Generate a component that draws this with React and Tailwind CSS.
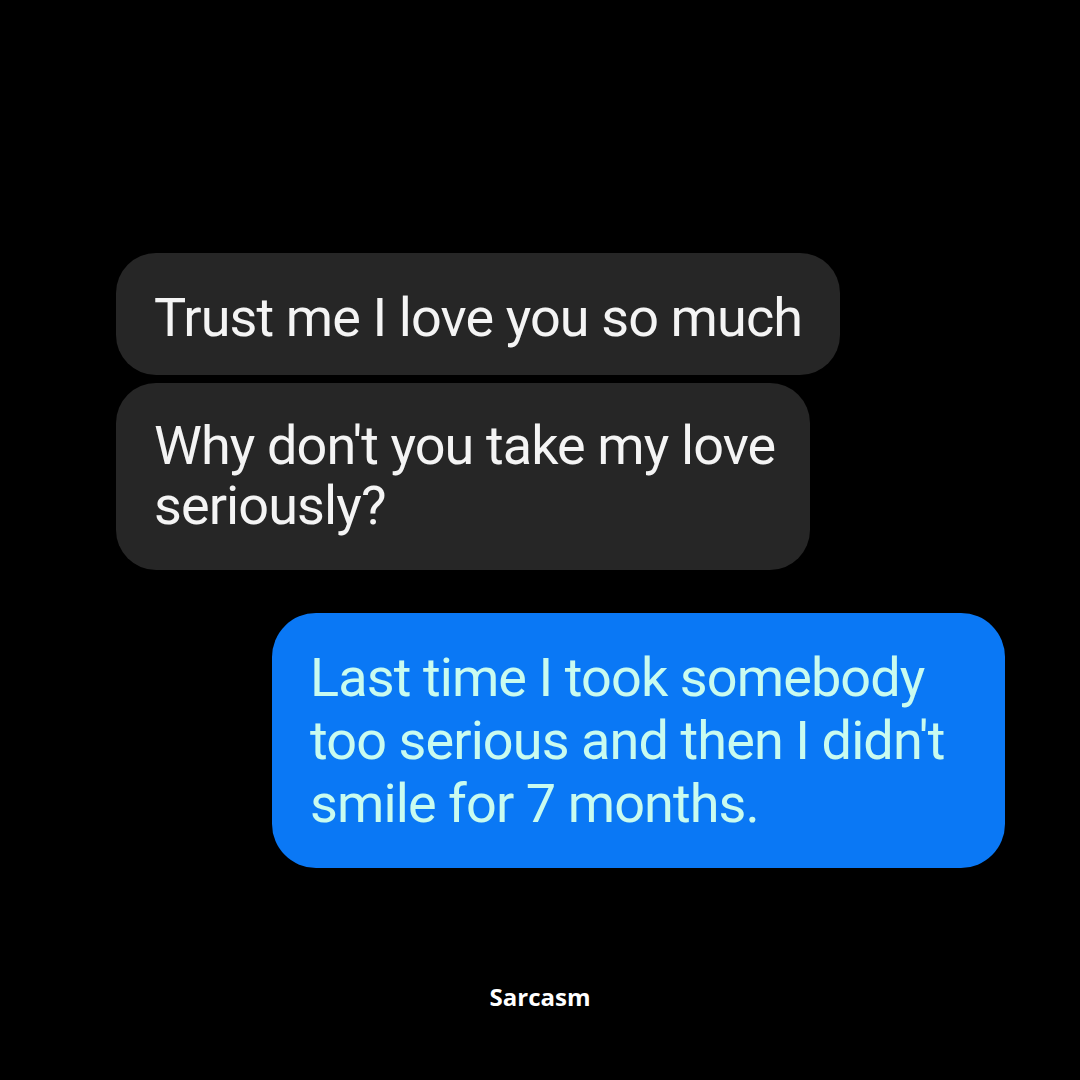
export default function App() {
  return (
    <div className="w-[1080px] h-[1080px] bg-black flex flex-col" style={{ fontFamily: 'Roboto, "Liberation Sans", sans-serif' }}>
      <div className="h-[253px]" />
      <div className="flex flex-col gap-[8px] pl-[116px]">
        <div className="w-[724px] h-[122px] rounded-[40px] bg-[#262626] pl-[38px] pt-[35px] text-[54px] leading-[60px] tracking-[-0.9px] text-[#f4f4f4]">
          Trust me I love you so much
        </div>
        <div className="w-[694px] h-[187px] rounded-[40px] bg-[#262626] pl-[38px] pt-[33px] text-[54px] leading-[60px] tracking-[-0.9px] text-[#f4f4f4]">
          Why don't you take my love<br />seriously?
        </div>
      </div>
      <div className="flex pl-[272px] pt-[43px]">
        <div className="w-[733px] h-[255px] rounded-[44px] bg-[#0a78f5] pl-[38px] pt-[33px] text-[54px] leading-[63px] tracking-[-0.9px] text-[#c9fbef]">
          Last time I took somebody<br />too serious and then I didn't<br />smile for 7 months.
        </div>
      </div>
      <div className="flex justify-center pt-[111px]">
        <span className="text-[24px] font-bold text-white" style={{ fontFamily: '"Open Sans", sans-serif' }}>Sarcasm</span>
      </div>
    </div>
  );
}
